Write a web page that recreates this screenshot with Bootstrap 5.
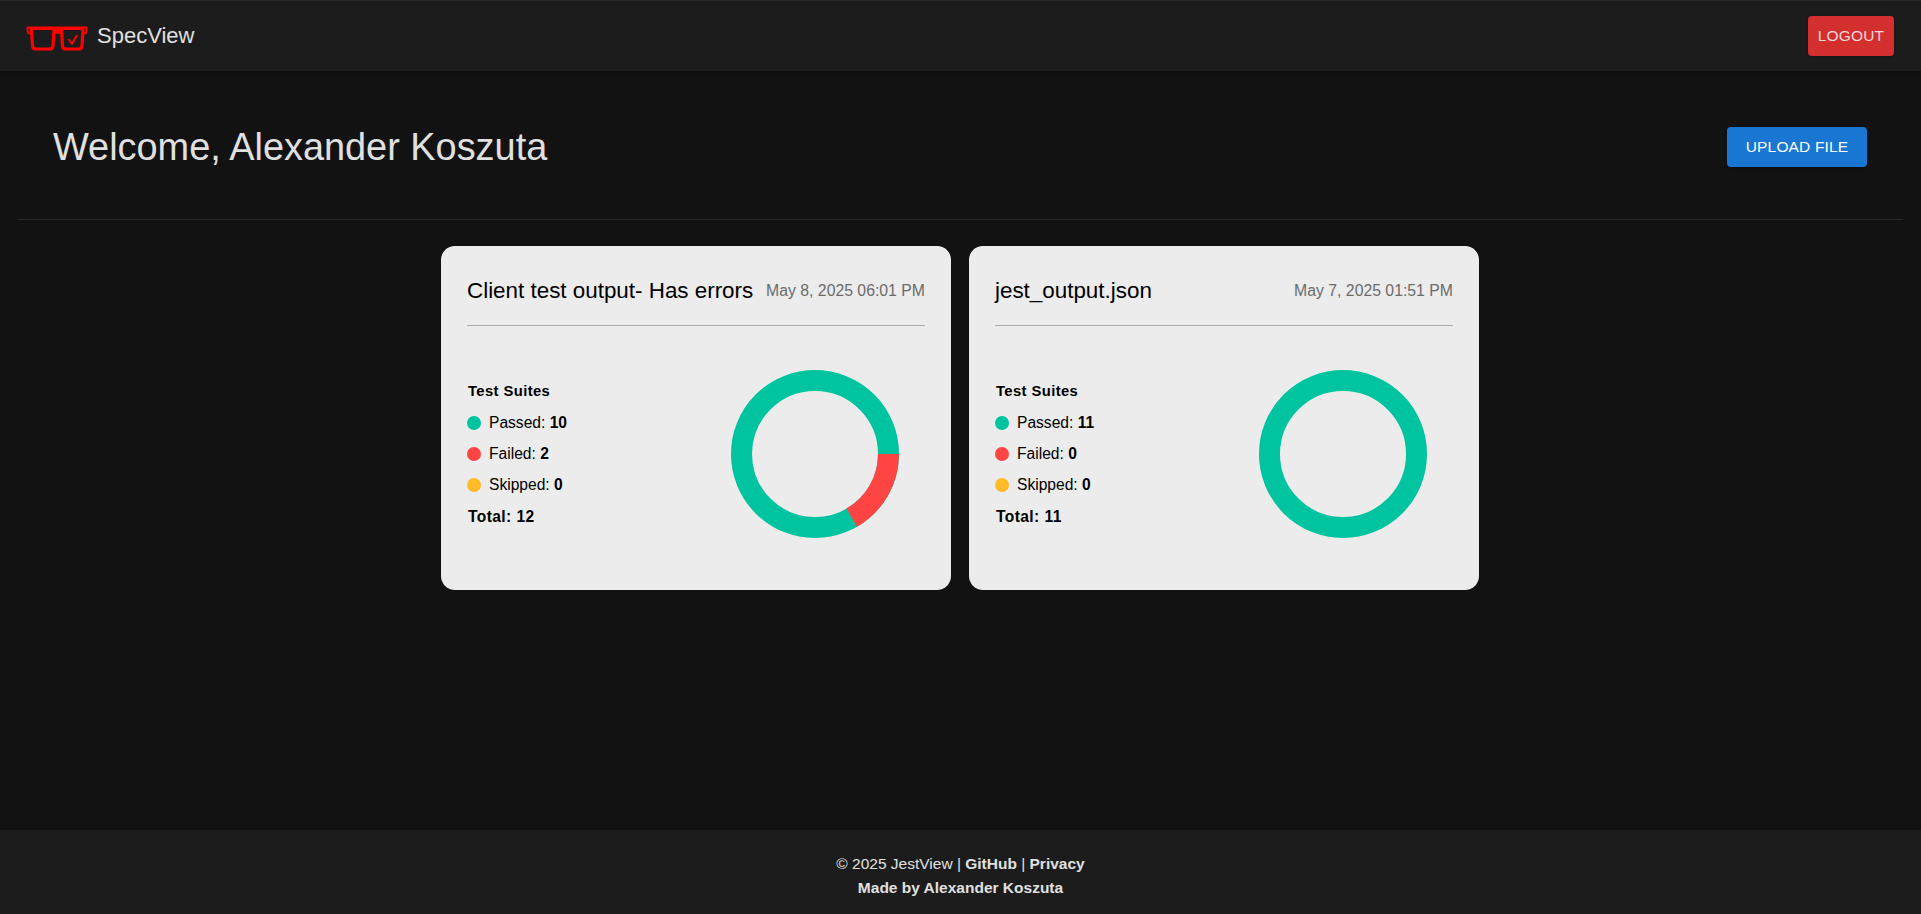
<!DOCTYPE html>
<html lang="en">
<head>
<meta charset="utf-8">
<title>SpecView</title>
<link href="https://cdn.jsdelivr.net/npm/bootstrap@5.3.0/dist/css/bootstrap.min.css" rel="stylesheet">
<style>
html,body{height:100%}
body{font-family:"Liberation Sans",Arial,sans-serif;background:#121212;color:#e0e0e0;height:914px;overflow:hidden}
.sv-top{height:71px;background:#1c1c1c;border-top:1px solid #272727;padding:0 27px 0 26px;box-shadow:0 2px 6px rgba(0,0,0,.3);position:relative}
.sv-brand{font-size:22px;color:#e0e0e0;gap:9px;line-height:1}
.sv-btn{font-size:15.5px;line-height:24px;border:0;border-radius:4px;color:#fff;text-transform:uppercase;letter-spacing:.15px;box-shadow:0 1px 3px rgba(0,0,0,.3)}
.sv-logout{background:#d32f2f;color:#f0d8d8;width:86px;height:40px;padding:0}
.sv-upload{background:#1976d2;width:140px;height:40px;padding:0;margin-top:-2px}
.sv-head{height:149px;margin:0 18px;padding:5px 36px 0 35px;border-bottom:1px solid #262626}
.sv-head h1{font-size:37.9px;font-weight:400;margin:0;color:#e0e0e0;line-height:1.2}
.sv-cards{gap:18px;padding:26px 1px 0 0}
.sv-card{width:510px;height:344px;background:#ececec;border-radius:14px;padding:26px;color:#000;border:0}
.sv-card-head{border-bottom:1px solid #aaa;height:54px;align-items:flex-start;padding-top:7px}
.sv-title{font-size:22.4px;line-height:24px}
.sv-date{font-size:15.8px;color:#6b6b6b;line-height:24px}
.sv-body{height:168px;margin-top:44px}
.sv-stats{font-size:15.6px;line-height:20px;width:200px}
.sv-h{font-size:14.8px;font-weight:700;letter-spacing:.4px;margin:0 0 6px 1px}
.sv-row{gap:8px;height:31px}
.sv-dot{width:14px;height:14px;border-radius:50%;flex:none}
.sv-total{font-weight:700;letter-spacing:.4px;margin:7px 0 0 1px}
.sv-foot{height:84px;background:#1c1c1c;font-size:15.5px;line-height:23.5px;color:#e0e0e0;padding-top:22px}
.sv-foot a{color:#e0e0e0;font-weight:700;text-decoration:none}
.sv-made{font-weight:700}
.sv-main{height:759px}
.sv-chart{margin-right:26px}
</style>
</head>
<body>
<nav class="sv-top d-flex align-items-center justify-content-between">
  <a class="sv-brand d-flex align-items-center text-decoration-none" href="#">
    <svg width="62" height="30" viewBox="0 -5 62 30" fill="none" stroke="#f00" stroke-width="3.200" stroke-linejoin="round" aria-hidden="true">
      <path d="M5 2.200H57" stroke-width="3.400"/>
      <path d="M1.500 1.500H5V7.500H3.500Q1.800 7.500 1.700 6z" stroke-width="2"/>
      <path d="M60.500 1.500H57V7.500H58.500Q60.200 7.500 60.300 6z" stroke-width="2"/>
      <path d="M5.500 3L6.500 20q.3 3 3 3H24q2.700 0 3-3L28 3"/>
      <path d="M35.500 3L36.500 20q.3 3 3 3H53q2.700 0 3-3L57 3"/>
      <path d="M27 5.800h9" stroke-width="4"/>
      <path d="M42.500 13l3.500 5l5-9" stroke-width="2"/>
    </svg>
    <span>SpecView</span>
  </a>
  <button class="btn sv-btn sv-logout" type="button">Logout</button>
</nav>
<main class="sv-main">
  <div class="sv-head d-flex align-items-center justify-content-between">
    <h1>Welcome, Alexander Koszuta</h1>
    <button class="btn sv-btn sv-upload" type="button">Upload File</button>
  </div>
  <div class="sv-cards d-flex justify-content-center">
    <div class="card sv-card">
      <div class="sv-card-head d-flex justify-content-between"><span class="sv-title">Client test output- Has errors</span><span class="sv-date">May 8, 2025 06:01 PM</span></div>
      <div class="sv-body d-flex align-items-center justify-content-between">
        <div class="sv-stats">
          <div class="sv-h">Test Suites</div>
          <div class="sv-row d-flex align-items-center"><span class="sv-dot" style="background:#00c4a0"></span><span>Passed: <b>10</b></span></div>
          <div class="sv-row d-flex align-items-center"><span class="sv-dot" style="background:#ff4444"></span><span>Failed: <b>2</b></span></div>
          <div class="sv-row d-flex align-items-center"><span class="sv-dot" style="background:#ffbb28"></span><span>Skipped: <b>0</b></span></div>
          <div class="sv-total">Total: 12</div>
        </div>
        <svg class="sv-chart" width="168" height="168" viewBox="-84 -84 168 168" aria-hidden="true">
          <circle r="73.500" fill="none" stroke="#00c4a0" stroke-width="21"/>
          <path d="M84 0A84 84 0 0 1 42 72.750L31.500 54.560A63 63 0 0 0 63 0z" fill="#ff4444"/>
        </svg>
      </div>
    </div>
    <div class="card sv-card">
      <div class="sv-card-head d-flex justify-content-between"><span class="sv-title">jest_output.json</span><span class="sv-date">May 7, 2025 01:51 PM</span></div>
      <div class="sv-body d-flex align-items-center justify-content-between">
        <div class="sv-stats">
          <div class="sv-h">Test Suites</div>
          <div class="sv-row d-flex align-items-center"><span class="sv-dot" style="background:#00c4a0"></span><span>Passed: <b>11</b></span></div>
          <div class="sv-row d-flex align-items-center"><span class="sv-dot" style="background:#ff4444"></span><span>Failed: <b>0</b></span></div>
          <div class="sv-row d-flex align-items-center"><span class="sv-dot" style="background:#ffbb28"></span><span>Skipped: <b>0</b></span></div>
          <div class="sv-total">Total: 11</div>
        </div>
        <svg class="sv-chart" width="168" height="168" viewBox="-84 -84 168 168" aria-hidden="true">
          <circle r="73.500" fill="none" stroke="#00c4a0" stroke-width="21"/>
        </svg>
      </div>
    </div>
  </div>
</main>
<footer class="sv-foot text-center">
  <div>© 2025 JestView | <a href="#">GitHub</a> | <a href="#">Privacy</a></div>
  <div class="sv-made">Made by Alexander Koszuta</div>
</footer>
<script src="https://cdn.jsdelivr.net/npm/bootstrap@5.3.0/dist/js/bootstrap.bundle.min.js"></script>
</body>
</html>
